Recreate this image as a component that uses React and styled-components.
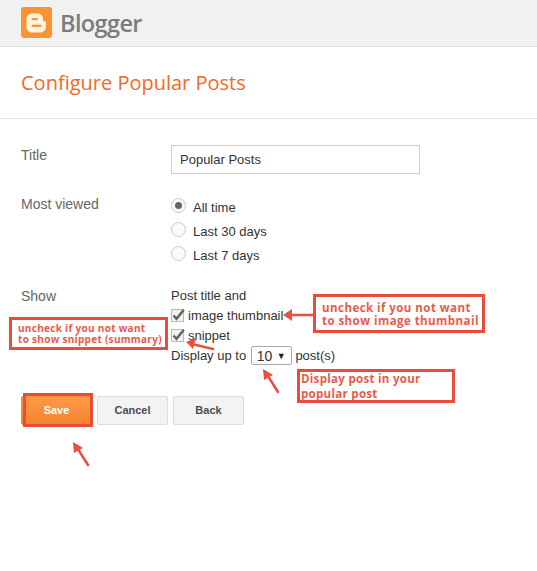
import React from 'react';
import styled, { createGlobalStyle } from 'styled-components';

const GlobalStyle = createGlobalStyle`
    html, body {
        margin: 0;
        background: #fff;
        font-family: "Liberation Sans", Arial, sans-serif;
    }
`;

const BloggerLogo = () => (
    <svg width="31" height="31" viewBox="0 0 31 31">
        <rect width="31" height="31" rx="3" fill="#fb9330"/>
        <path d="M11 6.500h5.500c3.200 0 5.500 2.300 5.500 5.200v1.300c0 .8.600 1.300 1.300 1.300h.5c.9 0 1.200.6 1.200 1.300v4.200c0 3.200-2.400 5.700-5.600 5.700H11c-3.100 0-5.500-2.400-5.500-5.500v-8c0-3.100 2.400-5.500 5.500-5.500z" fill="#fff3e4"/>
        <rect x="10.500" y="11" width="6.500" height="2.200" rx="1.100" fill="#fb9330"/>
        <rect x="10.500" y="17.800" width="10" height="2.200" rx="1.100" fill="#fb9330"/>
    </svg>
);

const Check = () => (
    <CheckMark width="14" height="14" viewBox="0 0 14 14">
        <path d="M2.500 7.500 L5.500 10.800 L12.800 1.800" fill="none" stroke="#626262" strokeWidth="2.400"/>
    </CheckMark>
);

const Arrows = () => (
    <ArrowLayer width="537" height="571" viewBox="0 0 537 571">
        <g fill="none" stroke="#e8503f" strokeWidth="2.500" strokeLinecap="round">
            <path d="M313 315H288"/>
            <path d="M213 349L192 344"/>
            <path d="M278 392L266 373"/>
            <path d="M88 465L76 446"/>
        </g>
        <g fill="#e8503f">
            <path d="M283 315L292 309V321Z"/>
            <path d="M186 342L196 338L193 349Z"/>
            <path d="M263 369L273 375L264 380Z"/>
            <path d="M73 442L83 448L74 453Z"/>
        </g>
    </ArrowLayer>
);

const App = () => {
    return (
        <Page>
            <GlobalStyle/>
            <Header>
                <BloggerLogo/>
                <Brand>Blogger</Brand>
            </Header>
            <TitleBar>Configure Popular Posts</TitleBar>

            <Form>
                <Row>
                    <Label>Title</Label>
                    <TextInput>Popular Posts</TextInput>
                </Row>
                <Row $top={20}>
                    <Label>Most viewed</Label>
                    <Options>
                        <Option><Radio $on/>All time</Option>
                        <Option><Radio/>Last 30 days</Option>
                        <Option><Radio/>Last 7 days</Option>
                    </Options>
                </Row>
                <Row $top={21}>
                    <Label>Show</Label>
                    <ShowList>
                        <Line>Post title and</Line>
                        <Line><CheckBox><Check/></CheckBox>image thumbnail</Line>
                        <Line><CheckBox><Check/></CheckBox>snippet</Line>
                        <Line>Display up to <Select>10<Caret>▼</Caret></Select> post(s)</Line>
                    </ShowList>
                </Row>
                <Buttons>
                    <SaveButton>Save</SaveButton>
                    <Button>Cancel</Button>
                    <Button>Back</Button>
                </Buttons>
            </Form>

            <Arrows/>
            <Note $x={313} $y={294} $w={172} $h={39} $size={11.5} $spacing={0.45} $line={13} $pad={6}>
                uncheck if you not want<br/>to show image thumbnail
            </Note>
            <Note $x={9} $y={317} $w={159} $h={33} $size={10} $spacing={0.3} $line={11} $pad={6}>
                uncheck if you not want<br/>to show snippet (summary)
            </Note>
            <Note $x={297} $y={369} $w={158} $h={34} $size={11.5} $spacing={0.3} $line={15} $pad={1}>
                Display post in your<br/>popular post
            </Note>
            <SaveOutline/>
        </Page>
    );
};

export default App;

const Page = styled.div`
    position: relative;
    width: 537px;
    height: 571px;
    overflow: hidden;
    background: #fff;
`;

const Header = styled.div`
    display: flex;
    align-items: center;
    gap: 8px;
    box-sizing: border-box;
    height: 47px;
    padding: 0 21px 1px;
    background: #f1f1f1;
    border-bottom: 1px solid #dedede;
`;

const Brand = styled.div`
    font-family: "Open Sans", sans-serif;
    font-size: 23.5px;
    font-weight: 600;
    letter-spacing: -0.6px;
    color: #7a7c7e;
`;

const TitleBar = styled.div`
    box-sizing: border-box;
    height: 72px;
    padding: 22px 21px 0;
    font-family: "Open Sans", sans-serif;
    font-size: 20px;
    color: #f4691f;
    border-bottom: 1px solid #e6e6e6;
`;

const Form = styled.div`
    display: flex;
    flex-direction: column;
    padding: 26px 21px 0;
`;

const Row = styled.div`
    display: grid;
    grid-template-columns: 150px 1fr;
    align-items: start;
    margin-top: ${props => props.$top || 0}px;
`;

const Label = styled.div`
    font-size: 14px;
    line-height: 20px;
    color: #666;
`;

const TextInput = styled.div`
    box-sizing: border-box;
    width: 249px;
    height: 29px;
    padding: 0 8px;
    border: 1px solid #ccc;
    font-size: 13px;
    line-height: 27px;
    color: #333;
`;

const Options = styled.div`
    display: flex;
    flex-direction: column;
    gap: 4px;
    margin-top: 3px;
`;

const Option = styled.div`
    display: flex;
    align-items: center;
    height: 20px;
    font-size: 13px;
    color: #333;
`;

const Radio = styled.span`
    box-sizing: border-box;
    display: flex;
    align-items: center;
    justify-content: center;
    width: 15px;
    height: 15px;
    margin: -3px 7px 0 0;
    border: 1px solid #c6c6c6;
    border-radius: 50%;
    background: #fafafa;

    &::after {
        content: '';
        display: ${props => props.$on ? 'block' : 'none'};
        width: 7px;
        height: 7px;
        border-radius: 50%;
        background: #666;
    }
`;

const ShowList = styled.div`
    display: flex;
    flex-direction: column;
    gap: 1px;
`;

const Line = styled.div`
    display: flex;
    align-items: center;
    width: fit-content;
    height: 19px;
    font-size: 13px;
    white-space: pre;
    color: #333;
`;

const CheckBox = styled.span`
    position: relative;
    box-sizing: border-box;
    width: 13px;
    height: 13px;
    margin-right: 4px;
    border: 1px solid #bbb;
    background: #f1f1f1;
`;

const CheckMark = styled.svg`
    position: absolute;
    left: -1px;
    top: -2px;
`;

const Select = styled.span`
    box-sizing: border-box;
    display: flex;
    align-items: center;
    justify-content: space-between;
    width: 41px;
    height: 19px;
    margin-left: 1px;
    padding: 0 5px;
    border: 1px solid #aaa;
    border-radius: 2px;
    font-size: 14px;
`;

const Caret = styled.span`
    font-size: 9px;
    color: #222;
`;

const Buttons = styled.div`
    display: flex;
    gap: 5px;
    margin-top: 31px;
`;

const Button = styled.div`
    box-sizing: border-box;
    width: 71px;
    height: 29px;
    border: 1px solid #dcdcdc;
    border-radius: 2px;
    background: #f3f3f3;
    font-size: 11px;
    font-weight: 700;
    line-height: 27px;
    text-align: center;
    color: #4c4c4c;
`;

const SaveButton = styled(Button)`
    border-color: #f5862c;
    background: linear-gradient(#fd9a4a, #f4842e);
    color: #fff;
`;

const SaveOutline = styled.div`
    position: absolute;
    left: 23px;
    top: 393px;
    box-sizing: border-box;
    width: 70px;
    height: 34px;
    border: 3px solid #ea4c3a;
`;

const ArrowLayer = styled.svg`
    position: absolute;
    left: 0;
    top: 0;
    pointer-events: none;
`;

const Note = styled.div`
    position: absolute;
    left: ${props => props.$x}px;
    top: ${props => props.$y}px;
    box-sizing: border-box;
    display: flex;
    align-items: center;
    width: ${props => props.$w}px;
    height: ${props => props.$h}px;
    padding-left: ${props => props.$pad}px;
    border: 3px solid #ea4c3a;
    background: #fff;
    font-family: "Open Sans", sans-serif;
    font-size: ${props => props.$size}px;
    font-weight: 700;
    line-height: ${props => props.$line}px;
    letter-spacing: ${props => props.$spacing}px;
    white-space: nowrap;
    color: #ea5a4a;
`;
